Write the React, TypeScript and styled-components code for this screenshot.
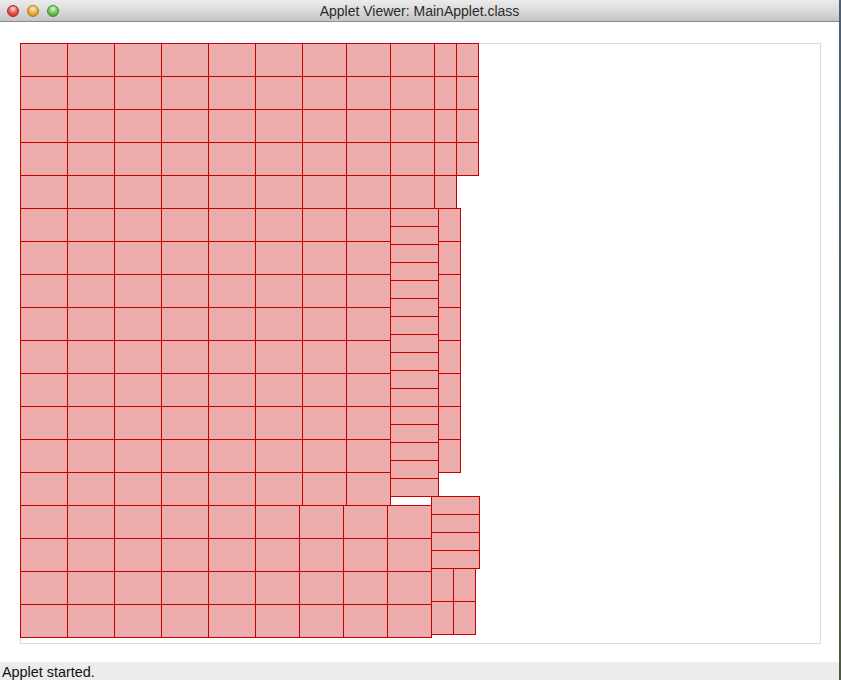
import React from 'react'
import styled, { createGlobalStyle } from 'styled-components'

const GlobalStyle = createGlobalStyle`
  html, body {
    margin: 0;
    padding: 0;
    background: #3d4d5c;
  }
  #root {
    width: 841px;
    height: 680px;
  }
`

const Page = styled.div`
  display: flex;
  width: 841px;
  height: 680px;
  background: linear-gradient(#4a6078, #505a3c);
`

const Window = styled.div`
  display: flex;
  flex-direction: column;
  width: 839px;
  height: 680px;
  background: #fff;
`

const TitleBar = styled.div`
  position: relative;
  display: flex;
  align-items: center;
  justify-content: center;
  height: 22px;
  box-sizing: border-box;
  border-bottom: 1px solid #8c8c8c;
  background: linear-gradient(#ececec, #d6d6d6 60%, #c4c4c4);
  font-family: 'Liberation Sans', Arial, sans-serif;
  font-size: 14px;
  color: #2a2a2a;
`

const Lights = styled.div`
  position: absolute;
  left: 7px;
  top: 5px;
  display: flex;
  gap: 8px;
`

const Light = styled.span<{ $c: string; $d: string }>`
  width: 12px;
  height: 12px;
  border-radius: 50%;
  box-sizing: border-box;
  border: 1px solid ${(p) => p.$d};
  background: radial-gradient(circle at 50% 30%, #fff8 0, ${(p) => p.$c} 45%, ${(p) => p.$d} 100%);
`

const Content = styled.div`
  flex: 1;
  padding: 21px 0 0 20px;
  background: #fff;
`

const Panel = styled.div`
  width: 801px;
  height: 601px;
  box-shadow: inset 0 0 0 1px #dcdcdc;
`

const StatusBar = styled.div`
  height: 18px;
  background: #ececec;
  padding-left: 2px;
  font-family: 'Liberation Sans', Arial, sans-serif;
  font-size: 14.4px;
  line-height: 20px;
  color: #111;
`

const Cell = styled.div<{ $w: number; $h: number }>`
  flex: none;
  box-sizing: border-box;
  width: ${(p) => p.$w + 1}px;
  height: ${(p) => p.$h + 1}px;
  margin: 0 -1px -1px 0;
  border: 1px solid #c40000;
  background: #eeadad;
`

const Stack = styled.div<{ $shift?: number }>`
  display: flex;
  flex-direction: column;
  align-items: flex-start;
  margin-left: ${(p) => p.$shift || 0}px;
`

const Row = styled.div`
  display: flex;
  align-items: flex-start;
`

type Col = { w: number; h: number; n: number }

const cols = (widths: number[], h: number, n: number): Col[] =>
  widths.map((w) => ({ w, h, n }))

function Block({ columns }: { columns: Col[] }) {
  return (
    <Row>
      {columns.map((c, i) => (
        <Stack key={i}>
          {Array.from({ length: c.n }).map((_, j) => (
            <Cell key={j} $w={c.w} $h={c.h} />
          ))}
        </Stack>
      ))}
    </Row>
  )
}

const TOP = [
  ...cols([47, 47, 47, 47, 47, 47, 44, 44, 44, 22], 33, 5),
  { w: 22, h: 33, n: 4 },
]
const MID = cols([47, 47, 47, 47, 47, 47, 44, 44], 33, 9)
const LOW = cols([47, 47, 47, 47, 47, 44, 44, 44, 44], 33, 4)
const STRIPS = [
  { w: 48, h: 18, n: 16 },
  { w: 22, h: 33, n: 8 },
]
const CORNER_TOP = [{ w: 48, h: 18, n: 4 }]
const CORNER_LOW = cols([22, 22], 33, 2)

export default function App() {
  return (
    <>
      <GlobalStyle />
      <Page>
        <Window>
          <TitleBar>
            <Lights>
              <Light $c="#ee5a52" $d="#b3261e" />
              <Light $c="#f3b63e" $d="#b7791a" />
              <Light $c="#7ccc5a" $d="#3f8a2a" />
            </Lights>
            Applet Viewer: MainApplet.class
          </TitleBar>
          <Content>
            <Panel>
              <Block columns={TOP} />
              <Row>
                <Stack>
                  <Block columns={MID} />
                  <Block columns={LOW} />
                </Stack>
                <Stack $shift={-41}>
                  <Block columns={STRIPS} />
                  <Stack $shift={41}>
                    <Block columns={CORNER_TOP} />
                    <Block columns={CORNER_LOW} />
                  </Stack>
                </Stack>
              </Row>
            </Panel>
          </Content>
          <StatusBar>Applet started.</StatusBar>
        </Window>
      </Page>
    </>
  )
}
